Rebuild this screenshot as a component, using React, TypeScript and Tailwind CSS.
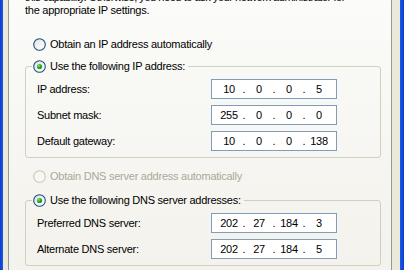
import React from 'react';

function Radio({ checked = false, disabled = false }: { checked?: boolean; disabled?: boolean }) {
  const id = checked ? 'rg-on' : disabled ? 'rg-dis' : 'rg-off';
  return (
    <svg width="13" height="13" viewBox="0 0 13 13" className="shrink-0 block">
      <defs>
        <linearGradient id={id} x1="0" y1="0" x2="1" y2="1">
          <stop offset="0" stopColor={disabled ? '#f7f6f1' : '#dcdad3'} />
          <stop offset="0.5" stopColor={disabled ? '#f7f6f1' : '#f4f3ee'} />
          <stop offset="1" stopColor="#ffffff" />
        </linearGradient>
        <radialGradient id="dot" cx="0.35" cy="0.35" r="0.7">
          <stop offset="0" stopColor="#8fe08f" />
          <stop offset="0.5" stopColor="#2fb02f" />
          <stop offset="1" stopColor="#178a17" />
        </radialGradient>
      </defs>
      <circle cx="6.5" cy="6.5" r="5.8" fill={`url(#${id})`} stroke={disabled ? '#cac8bb' : '#1c5180'} strokeWidth="1.1" />
      {checked && <circle cx="6.5" cy="6.5" r="2.6" fill="url(#dot)" />}
    </svg>
  );
}

function IpBox({ parts }: { parts: string[] }) {
  return (
    <div className="w-[126px] h-[20px] border border-[#7f9db9] bg-white flex items-center pl-[4px] text-black">
      {parts.map((p, i) => (
        <React.Fragment key={i}>
          <span className="w-[26px] text-center">{p}</span>
          {i < 3 && <span className="w-[4px] text-center">.</span>}
        </React.Fragment>
      ))}
    </div>
  );
}

function Row({ label, parts }: { label: string; parts: string[] }) {
  return (
    <div className="flex items-center h-[20px]">
      <span className="w-[174px]">{label}</span>
      <IpBox parts={parts} />
    </div>
  );
}

function Group({ title, children }: { title: string; children: React.ReactNode }) {
  return (
    <fieldset className="w-[356px] border border-[#d0d0bf] rounded-[3px] pb-[6px]">
      <legend className="ml-[6px] pl-[1px] pr-[3px]">
        <div className="flex items-center gap-[4px] h-[13px]">
          <Radio checked />
          <span>{title}</span>
        </div>
      </legend>
      <div className="flex flex-col gap-[6px] mt-[6px] pl-[11px]">{children}</div>
    </fieldset>
  );
}

export default function App() {
  return (
    <div
      className="w-[404px] h-[270px] overflow-hidden flex text-[11px] leading-[13px] tracking-[-0.25px] text-black"
      style={{ fontFamily: '"Liberation Sans", Arial, sans-serif' }}
    >
      <div className="w-[3px] bg-gradient-to-r from-[#0a3ccf] to-[#1c5be8]" />
      <div className="w-[5px] bg-[#ece9d8]" />
      <div className="flex-1 border-l border-r border-[#919b9c] bg-gradient-to-b from-[#fbfbf9] to-[#f3f2ec] pl-[16px] overflow-hidden">
        <p className="mt-[-9px] whitespace-nowrap">
          <span className="tracking-[-0.45px]">
            this capability. Otherwise, you need to ask your network administrator for
          </span>
          <br />
          the appropriate IP settings.
        </p>

        <div className="flex items-center gap-[4px] h-[13px] mt-[21px] ml-[8px]">
          <Radio />
          <span>Obtain an IP address automatically</span>
        </div>

        <div className="mt-[9px]">
          <Group title="Use the following IP address:">
            <Row label="IP address:" parts={['10', '0', '0', '5']} />
            <Row label="Subnet mask:" parts={['255', '0', '0', '0']} />
            <Row label="Default gateway:" parts={['10', '0', '0', '138']} />
          </Group>
        </div>

        <div className="flex items-center gap-[4px] h-[13px] mt-[12px] ml-[8px] text-[#aca899]">
          <Radio disabled />
          <span>Obtain DNS server address automatically</span>
        </div>

        <div className="mt-[11px]">
          <Group title="Use the following DNS server addresses:">
            <Row label="Preferred DNS server:" parts={['202', '27', '184', '3']} />
            <Row label="Alternate DNS server:" parts={['202', '27', '184', '5']} />
          </Group>
        </div>
      </div>
      <div className="w-[8px] bg-[#ece9d8]" />
      <div className="w-[4px] bg-gradient-to-r from-[#1c5be8] to-[#0a3ccf]" />
    </div>
  );
}
